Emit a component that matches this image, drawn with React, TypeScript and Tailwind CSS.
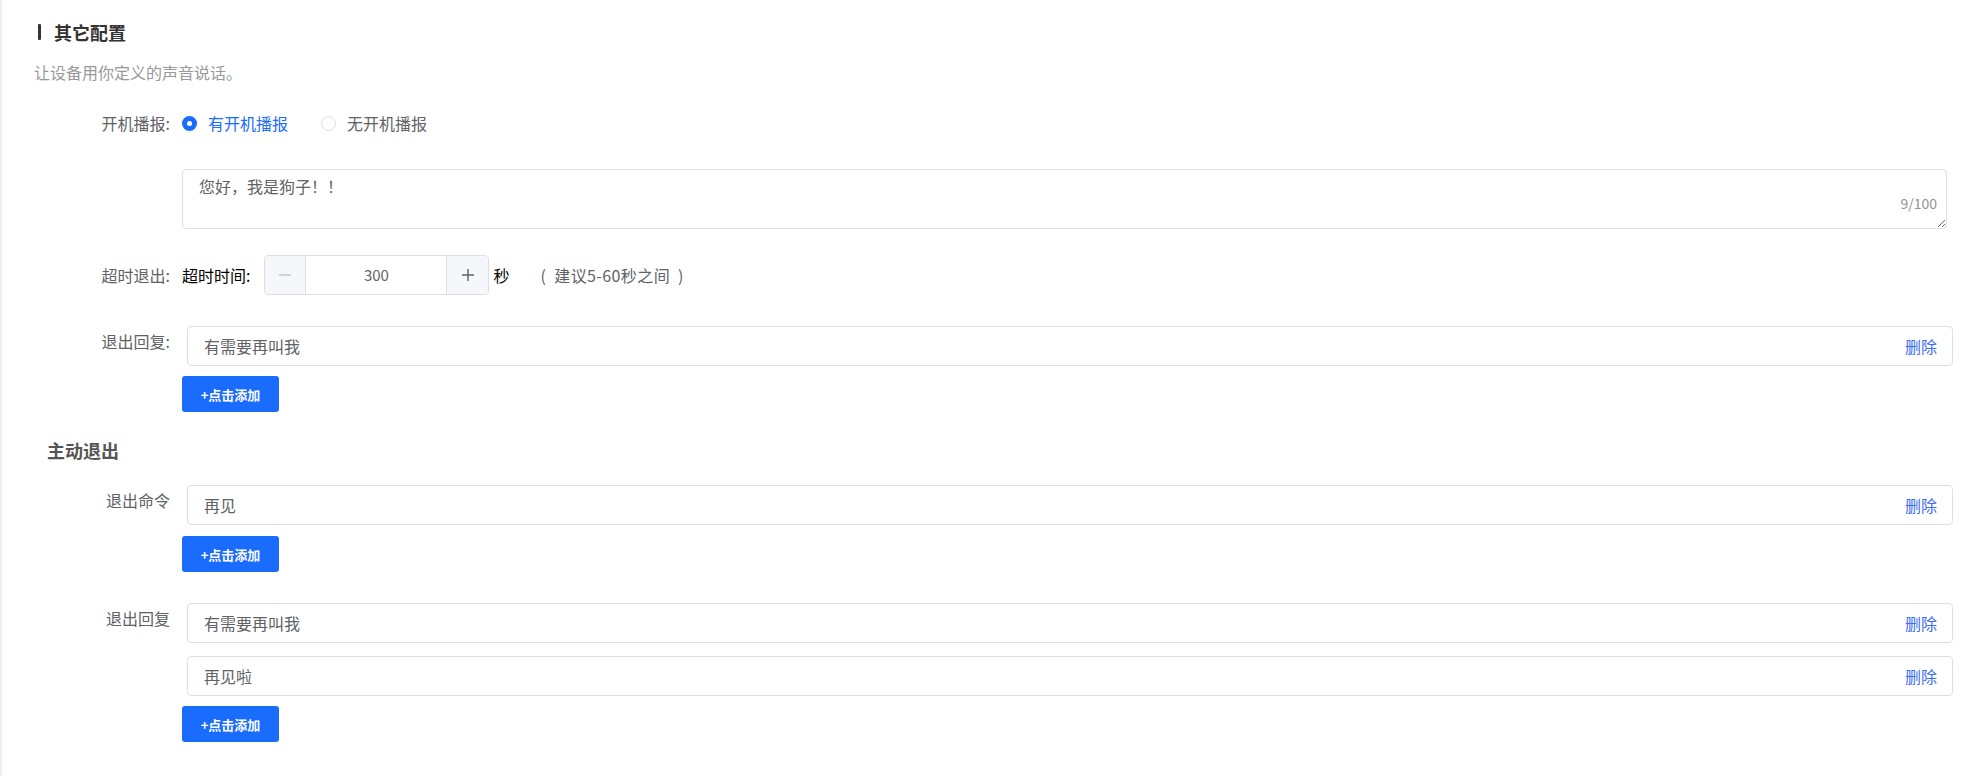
import React from "react";

function Label({ children, className = "" }: { children: React.ReactNode; className?: string }) {
  return (
    <div className={`w-[168px] shrink-0 text-right text-[16px] leading-6 text-[#606266] ${className}`}>
      {children}
    </div>
  );
}

function ItemInput({ text }: { text: string }) {
  return (
    <div className="ml-[5px] flex h-10 items-center justify-between rounded border border-[#dcdfe6] bg-white pl-4 pr-[15px] text-[16px] leading-6">
      <span className="text-[#606266]">{text}</span>
      <span className="cursor-pointer text-[#3b6cf6]">删除</span>
    </div>
  );
}

function AddButton() {
  return (
    <button className="flex h-9 w-[97px] items-center justify-center rounded-[3px] bg-[#1a6cff] text-[13px] font-bold leading-none text-white">
      +点击添加
    </button>
  );
}

export default function App() {
  return (
    <div className="min-h-[776px] w-full border-l-2 border-[#eeeef4] bg-white font-['Noto_Sans_CJK_SC','Noto_Sans',sans-serif]">
      {/* Title */}
      <div className="flex items-center gap-[13px] pl-[36px] pt-[20px]">
        <span className="h-4 w-[3px] rounded-[1px] bg-[#333]" />
        <span className="text-[18px] font-bold leading-6 text-[#333]">其它配置</span>
      </div>
      <div className="mt-[16px] pl-[32px] text-[16px] leading-6 text-[#999]">让设备用你定义的声音说话。</div>

      {/* Radio row */}
      <div className="mt-[27px] flex items-center">
        <Label>开机播报:</Label>
        <div className="ml-3 flex items-center text-[16px] leading-6">
          <span className="flex h-[15px] w-[15px] items-center justify-center rounded-full bg-[#1a6cff]">
            <span className="h-[5px] w-[5px] rounded-full bg-white" />
          </span>
          <span className="ml-[11px] text-[#1a6cff]">有开机播报</span>
          <span className="ml-[33px] h-[15px] w-[15px] rounded-full border border-[#dcdfe6] bg-white" />
          <span className="ml-[11px] text-[#606266]">无开机播报</span>
        </div>
      </div>

      {/* Textarea */}
      <div className="mt-[34px] flex">
        <div className="w-[168px] shrink-0" />
        <div className="relative ml-3 mr-[31px] flex-1">
          <textarea
            className="block h-[60px] w-full resize-y rounded border border-[#dcdfe6] bg-white pl-4 pr-4 pt-1 text-[16px] leading-6 text-[#606266] outline-none"
            defaultValue="您好，我是狗子！！"
          />
          <span className="pointer-events-none absolute bottom-[18px] right-[10px] text-[14px] leading-4 text-[#909399]">9/100</span>
        </div>
      </div>

      {/* Stepper row */}
      <div className="mt-[26px] flex items-center">
        <Label>超时退出:</Label>
        <div className="ml-3 flex items-center text-[16px] leading-6">
          <span className="text-black">超时时间:</span>
          <div className="ml-[14px] flex h-10 w-[225px] overflow-hidden rounded border border-[#dcdfe6]">
            <div className="flex w-[41px] items-center justify-center border-r border-[#dcdfe6] bg-[#f5f7fa]">
              <svg width="14" height="14" viewBox="0 0 14 14">
                <line x1="1" y1="7" x2="13" y2="7" stroke="#c0c4cc" strokeWidth="1.4" />
              </svg>
            </div>
            <div className="flex flex-1 items-center justify-center text-[15px] text-[#606266]">300</div>
            <div className="flex w-[42px] items-center justify-center border-l border-[#dcdfe6] bg-[#f5f7fa]">
              <svg width="14" height="14" viewBox="0 0 14 14">
                <line x1="1" y1="7" x2="13" y2="7" stroke="#606266" strokeWidth="1.4" />
                <line x1="7" y1="1" x2="7" y2="13" stroke="#606266" strokeWidth="1.4" />
              </svg>
            </div>
          </div>
          <span className="ml-1 text-black">秒</span>
          <span className="ml-[31px] whitespace-pre tracking-[0.4px] text-[#606266]">(  建议5-60秒之间  )</span>
        </div>
      </div>

      {/* Exit reply */}
      <div className="mt-[31px] flex">
        <Label className="pt-[3px]">退出回复:</Label>
        <div className="ml-3 mr-[25px] flex flex-1 flex-col items-stretch">
          <ItemInput text="有需要再叫我" />
          <div className="mt-[10px]">
            <AddButton />
          </div>
        </div>
      </div>

      {/* 主动退出 */}
      <div className="mt-[26px] pl-[45px] text-[18px] font-bold leading-6 text-[#555]">主动退出</div>

      <div className="mt-[23px] flex">
        <Label className="pt-[3px]">退出命令</Label>
        <div className="ml-3 mr-[25px] flex flex-1 flex-col items-stretch">
          <ItemInput text="再见" />
          <div className="mt-[11px]">
            <AddButton />
          </div>
        </div>
      </div>

      <div className="mt-[31px] flex">
        <Label className="pt-[3px]">退出回复</Label>
        <div className="ml-3 mr-[25px] flex flex-1 flex-col items-stretch">
          <ItemInput text="有需要再叫我" />
          <div className="mt-[13px]">
            <ItemInput text="再见啦" />
          </div>
          <div className="mt-[10px]">
            <AddButton />
          </div>
        </div>
      </div>
    </div>
  );
}
